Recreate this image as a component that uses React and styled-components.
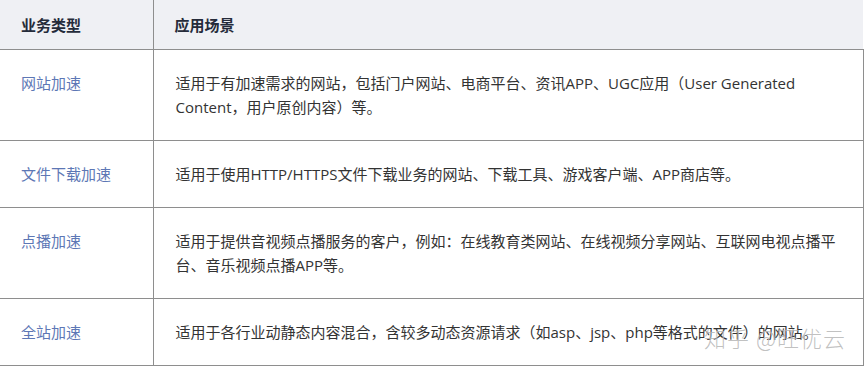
import React from 'react';
import styled, { createGlobalStyle } from 'styled-components';

const GlobalStyle = createGlobalStyle`
  html, body {
    margin: 0;
    padding: 0;
    background: #ffffff;
  }
  body {
    font-family: "Open Sans", "Noto Sans CJK SC", sans-serif;
  }
`;

const Wrapper = styled.div`
  position: relative;
  width: 864px;
  height: 370px;
  overflow: hidden;
`;

const Table = styled.table`
  width: 863px;
  border-collapse: collapse;
  table-layout: fixed;
  font-size: 15px;
`;

const Col = styled.col`
  width: ${props => props.width}px;
`;

const HeadCell = styled.th`
  height: 49px;
  padding: 0 21px;
  text-align: left;
  vertical-align: middle;
  background: #eff0f4;
  color: #252b3a;
  font-weight: 700;
  border-bottom: 1px solid #8e8e8e;
  border-right: ${props => (props.first ? '1px solid #8e8e8e' : 'none')};
`;

const Cell = styled.td`
  padding: ${props => (props.first ? '21px 21px' : '21px 22px')};
  line-height: 24px;
  vertical-align: top;
  color: ${props => (props.first ? '#5d77b5' : '#333333')};
  border-bottom: 1px solid #8e8e8e;
  border-right: 1px solid #8e8e8e;
`;

const Watermark = styled.div`
  position: absolute;
  right: 18px;
  bottom: 17px;
  font-family: "Noto Sans CJK SC", sans-serif;
  font-size: 22px;
  font-weight: 300;
  letter-spacing: 1px;
  color: rgba(140, 140, 140, 0.55);
  text-shadow: 0 0 1px rgba(255, 255, 255, 0.8);
  pointer-events: none;
`;

const rows = [
  {
    type: '网站加速',
    scene:
      '适用于有加速需求的网站，包括门户网站、电商平台、资讯APP、UGC应用（User Generated Content，用户原创内容）等。',
  },
  {
    type: '文件下载加速',
    scene: '适用于使用HTTP/HTTPS文件下载业务的网站、下载工具、游戏客户端、APP商店等。',
  },
  {
    type: '点播加速',
    scene:
      '适用于提供音视频点播服务的客户，例如：在线教育类网站、在线视频分享网站、互联网电视点播平台、音乐视频点播APP等。',
  },
  {
    type: '全站加速',
    scene: '适用于各行业动静态内容混合，含较多动态资源请求（如asp、jsp、php等格式的文件）的网站。',
  },
];

export default function App() {
  return (
    <Wrapper>
      <GlobalStyle />
      <Table>
        <colgroup>
          <Col width={153} />
          <Col width={710} />
        </colgroup>
        <thead>
          <tr>
            <HeadCell first>业务类型</HeadCell>
            <HeadCell>应用场景</HeadCell>
          </tr>
        </thead>
        <tbody>
          {rows.map(row => (
            <tr key={row.type}>
              <Cell first>{row.type}</Cell>
              <Cell>{row.scene}</Cell>
            </tr>
          ))}
        </tbody>
      </Table>
      <Watermark>知乎 @旺优云</Watermark>
    </Wrapper>
  );
}
